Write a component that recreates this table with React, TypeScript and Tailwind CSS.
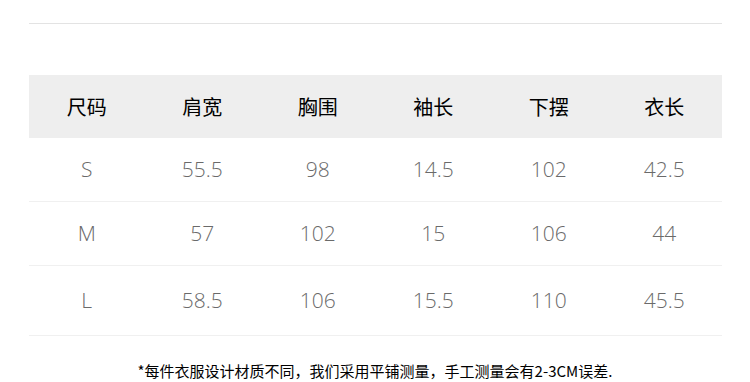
import React from "react";

const headers = ["尺码", "肩宽", "胸围", "袖长", "下摆", "衣长"];
const rows = [
  { h: "h-[64px]", cells: ["S", "55.5", "98", "14.5", "102", "42.5"] },
  { h: "h-[64px]", cells: ["M", "57", "102", "15", "106", "44"] },
  { h: "h-[70px]", cells: ["L", "58.5", "106", "15.5", "110", "45.5"] },
];

export default function App() {
  return (
    <div lang="zh-CN" className="w-[750px] h-[382px] bg-white overflow-hidden">
      <div className="ml-[29px] w-[693px]">
        <div className="h-[23px]" />
        <div className="h-px bg-[#e3e3e3]" />
        <div className="h-[51px]" />
        <div
          className="grid grid-cols-6 h-[63px] bg-[#eeeeee] items-center text-[20px] text-black"
          style={{ fontFamily: '"Noto Sans CJK SC", sans-serif' }}
        >
          {headers.map((t) => (
            <div key={t} className="text-center leading-none">
              {t}
            </div>
          ))}
        </div>
        {rows.map((r, i) => (
          <div
            key={i}
            className={`grid grid-cols-6 ${r.h} items-center border-b border-[#f0f0f0] text-[21px] font-light text-[#6a6a6a]`}
            style={{ fontFamily: '"Open Sans", sans-serif' }}
          >
            {r.cells.map((c, j) => (
              <div key={j} className="text-center leading-none">
                {c}
              </div>
            ))}
          </div>
        ))}
      </div>
      <div
        className="mt-[27px] text-center text-[15px] leading-none text-black"
        style={{ fontFamily: '"Noto Sans CJK SC", sans-serif' }}
      >
        *每件衣服设计材质不同，我们采用平铺测量，手工测量会有2-3CM误差.
      </div>
    </div>
  );
}
